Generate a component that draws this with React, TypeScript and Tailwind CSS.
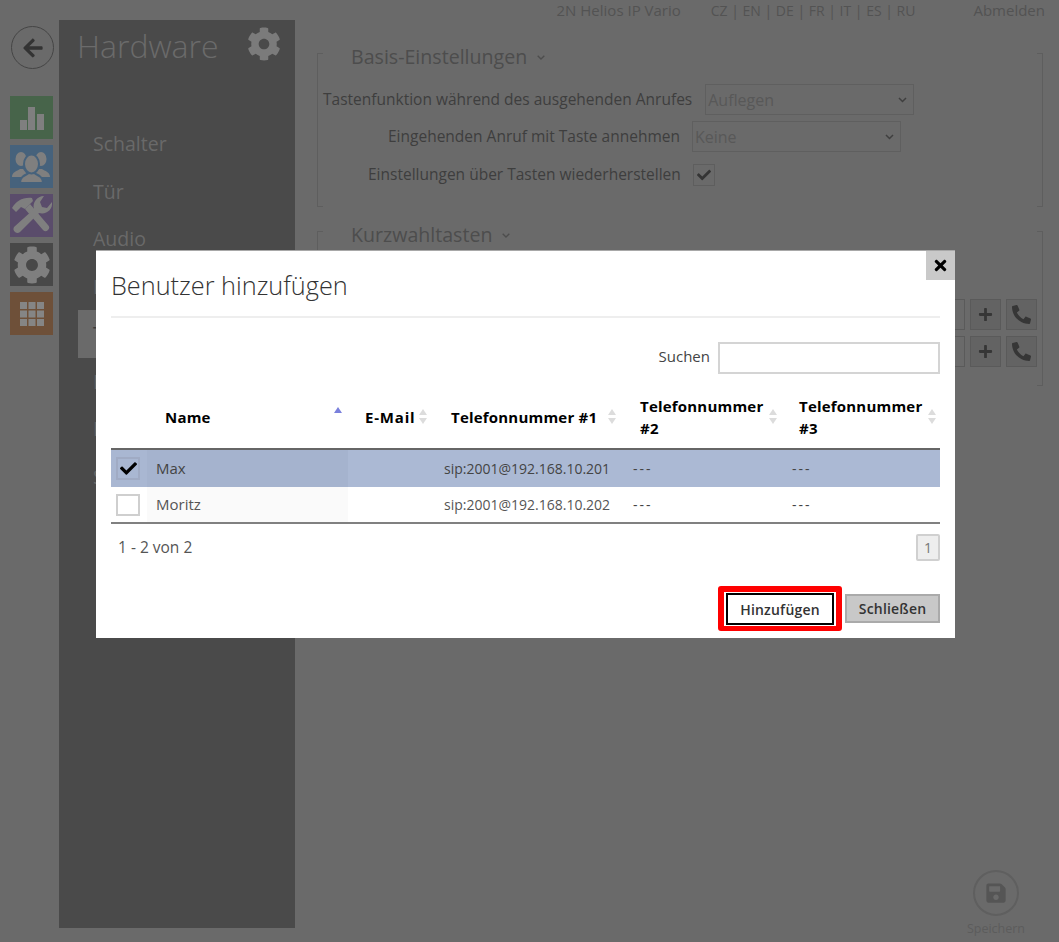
import { FaArrowLeft, FaCheck, FaCog, FaPhone, FaPlus, FaSave, FaTimes } from "react-icons/fa"

const menu = ["Schalter", "Tür", "Audio", "Kamera", "Tastatur", "Mikrofon", "E/A", "Sensor"]

function SortArrows({ active }: { active?: boolean }) {
  return (
    <svg width="8" height="15" viewBox="0 0 8 15" className="shrink-0">
      <path d="M4 0 8 6H0z" fill={active ? "#7a80dc" : "#dcdcdc"} />
      {!active && <path d="M4 15 0 9h8z" fill="#dcdcdc" />}
    </svg>
  )
}

function BarsIcon() {
  return (
    <svg width="43" height="43" viewBox="0 0 43 43" fill="#7f7f7f">
      <rect x="10" y="24" width="7" height="10" />
      <rect x="18" y="11" width="7" height="23" />
      <rect x="27" y="18" width="7" height="16" />
    </svg>
  )
}

function UsersIcon() {
  return (
    <svg width="43" height="43" viewBox="0 0 43 43" fill="#7f7f7f">
      <ellipse cx="11" cy="14" rx="5.500" ry="7" />
      <path d="M2 32c0-5 5-6 8-8h3l6 8z" />
      <ellipse cx="31" cy="14" rx="5.500" ry="7" />
      <path d="M40 32c0-5-5-6-8-8h-3l-6 8z" />
      <g stroke="#46627c" strokeWidth="2">
        <path d="M10 38c0-7 6-8 9-10h5c3 2 9 3 9 10z" />
        <ellipse cx="21.500" cy="19" rx="7.500" ry="9.500" />
      </g>
    </svg>
  )
}

function ToolsIcon() {
  return (
    <svg width="43" height="43" viewBox="0 0 43 43" fill="#7f7f7f">
      <path d="M15 15l5-5 18 21a3 3 0 0 1-5 5z" />
      <path d="M2 14c4-7 11-11 20-10l1 3-3 3-5 5-4-2-5 5z" />
      <path d="M4 33l20-18c-2-6 3-13 10-13l-4 6 2 5 5 1 5-6c1 8-6 13-13 11L10 38a4 4 0 0 1-6-5z" />
    </svg>
  )
}

function GridIcon() {
  const cells = [0, 8.5, 17]
  return (
    <svg width="24" height="24" viewBox="0 0 24 24" fill="#858585">
      {cells.map((y) => cells.map((x) => <rect key={`${x}-${y}`} x={x} y={y} width="7" height="7" />))}
    </svg>
  )
}

function Tile({ bg, children }: { bg: string; children: React.ReactNode }) {
  return <div className={`flex h-[43px] w-[43px] items-center justify-center ${bg}`}>{children}</div>
}

function Corners() {
  return (
    <>
      <span className="absolute left-0 top-0 h-px w-[5px] bg-[#5e5e5e]" />
      <span className="absolute bottom-0 left-0 h-px w-[5px] bg-[#5e5e5e]" />
      <span className="absolute right-0 top-0 h-px w-[5px] bg-[#5e5e5e]" />
      <span className="absolute bottom-0 right-0 h-px w-[5px] bg-[#5e5e5e]" />
    </>
  )
}

function SquareBtn({ children }: { children: React.ReactNode }) {
  return (
    <div className="flex h-[31px] w-[31px] items-center justify-center border border-[#5a5a5a] bg-[#636363] text-[#363636]">
      {children}
    </div>
  )
}

function Chevron() {
  return (
    <svg width="8" height="5" viewBox="0 0 8 5" fill="none" stroke="#4d4d4d" strokeWidth="1.300">
      <path d="M.7.7 4 4 7.300.7" />
    </svg>
  )
}

function FakeSelect({ value }: { value: string }) {
  return (
    <div className="flex h-[31px] w-[209px] items-center justify-between border border-[#5f5f5f] pl-0.5 pr-1.5 text-[16px] text-[#585858]">
      <span>{value}</span>
      <svg width="9" height="6" viewBox="0 0 9 6" fill="none" stroke="#3f3f3f" strokeWidth="1.500">
        <path d="M1 1l3.500 3.500L8 1" />
      </svg>
    </div>
  )
}

function Modal() {
  return (
    <div className="absolute left-[96px] top-[250px] h-[388px] w-[859px] border-t border-[#a8a8a8] bg-white px-[15px] font-['Open_Sans',sans-serif] text-[#444]">
      <button className="absolute right-0 top-0 flex h-[29px] w-[29px] items-center justify-center bg-[#c9c9c9] text-black">
        <FaTimes size={17} />
      </button>

      <h2 className="flex h-[67px] items-center border-b-2 border-[#eeeeee] pt-1 text-[25.300px] font-light leading-none text-[#333]">
        Benutzer hinzufügen
      </h2>

      <div className="mt-[24px] flex items-center justify-end gap-[8px]">
        <span className="pb-1 text-[15px]">Suchen</span>
        <input className="h-[32px] w-[222px] border-2 border-[#d4d4d4] bg-white" />
      </div>

      <table className="mt-[11px] w-[829px] table-fixed border-collapse text-[14px]">
        <colgroup>
          <col className="w-[36px]" />
          <col className="w-[201px]" />
          <col className="w-[89px]" />
          <col className="w-[188px]" />
          <col className="w-[159px]" />
          <col className="w-[156px]" />
        </colgroup>
        <thead>
          <tr className="h-[64px] border-b-2 border-[#666] text-left text-[15px] font-bold leading-[22px] tracking-[0.2px] text-black">
            <th />
            <th className="pl-[18px] pr-1.5">
              <div className="flex items-center justify-between">
                Name
                <span className="-mt-1"><SortArrows active /></span>
              </div>
            </th>
            <th className="pl-[17px]">
              <div className="flex items-center gap-[4px] tracking-[0.800px]">E-Mail <SortArrows /></div>
            </th>
            <th className="pl-[14px]">
              <div className="flex items-center gap-[11px]">Telefonnummer #1 <SortArrows /></div>
            </th>
            <th className="pl-[15px]">
              <div className="flex items-center gap-[4px]"><span className="w-[125px]">Telefonnummer #2</span> <SortArrows /></div>
            </th>
            <th className="pl-[15px]">
              <div className="flex items-center gap-[4px]"><span className="w-[125px]">Telefonnummer #3</span> <SortArrows /></div>
            </th>
          </tr>
        </thead>
        <tbody>
          <tr className="h-[38px] bg-[#abb9d4]">
            <td className="bg-[#a9b7d2]">
              <div className="ml-[5px] flex h-[23px] w-[24px] items-center justify-center border-2 border-[#a0abc4] text-black">
                <FaCheck size={17} />
              </div>
            </td>
            <td className="bg-[#a5b3ce] pl-[9px] text-[15px]">Max</td>
            <td />
            <td className="pl-[7px]">sip:2001@192.168.10.201</td>
            <td className="pl-2 tracking-[2px]">---</td>
            <td className="pl-2 tracking-[2px]">---</td>
          </tr>
          <tr className="h-[36px] border-b-2 border-[#808080]">
            <td>
              <div className="ml-[5px] mt-[1px] h-[22px] w-[24px] border-2 border-[#cfcfcf]" />
            </td>
            <td className="bg-[#fafafa] pl-[9px] text-[15px] text-[#555]">Moritz</td>
            <td />
            <td className="pl-[7px] text-[#555]">sip:2001@192.168.10.202</td>
            <td className="pl-2 tracking-[2px]">---</td>
            <td className="pl-2 tracking-[2px]">---</td>
          </tr>
        </tbody>
      </table>

      <div className="mt-[10px] flex items-center justify-between">
        <span className="pl-[7px] text-[15.500px] text-[#555]">1 - 2 von 2</span>
        <div className="flex h-[27px] w-[24px] items-center justify-center rounded-[2px] border-2 border-[#d0d0d0] bg-[#eeeeee] text-[14px] text-[#777]">
          1
        </div>
      </div>

      <div className="mt-[25px] flex items-center justify-end gap-[3px]">
        <div className="rounded-[3px] border-[6px] border-b-[5px] border-[#ff0000] px-[2px] py-[1px]">
          <button className="flex h-[32px] w-[108px] items-center justify-center border-2 border-black bg-white text-[14px] font-semibold tracking-[0.2px] text-[#333]">
            Hinzufügen
          </button>
        </div>
        <button className="flex h-[29px] w-[95px] items-center justify-center border-2 border-[#aaaaaa] bg-[#c8c8c8] text-[14px] font-semibold tracking-[0.2px] text-[#333]">
          Schließen
        </button>
      </div>
    </div>
  )
}

export default function App() {
  return (
    <div className="relative flex h-[942px] w-[1059px] overflow-hidden bg-[#6a6a6a] font-['Open_Sans',sans-serif]">
      <div className="w-[59px] shrink-0 pl-[10px] pt-[26px]">
        <div className="ml-px flex h-[43px] w-[43px] items-center justify-center rounded-full border border-[#454545] text-[#333]">
          <FaArrowLeft size={22} />
        </div>
        <div className="mt-[27px] flex flex-col gap-[6px]">
          <Tile bg="bg-[#47644a]"><BarsIcon /></Tile>
          <Tile bg="bg-[#46627c]"><UsersIcon /></Tile>
          <Tile bg="bg-[#5a4c6b]"><ToolsIcon /></Tile>
          <Tile bg="bg-[#484848]"><FaCog size={38} className="text-[#7f7f7f]" /></Tile>
          <Tile bg="bg-[#6e5039]"><GridIcon /></Tile>
        </div>
      </div>

      <aside className="mt-[20px] h-[908px] w-[236px] shrink-0 bg-[#4a4a4a]">
        <div className="flex items-center justify-between pl-[18px] pr-[14px] pt-[2px]">
          <h1 className="text-[32px] font-light text-[#6b6b6b]">Hardware</h1>
          <FaCog size={34} className="-mt-1 text-[#7b7b7b]" />
        </div>
        <ul className="mt-[50px] text-[19.500px] text-[#696969]">
          {menu.map((item, i) => (
            <li key={item} className={`ml-[19px] flex h-[47.500px] items-center pl-[15px] ${i === 4 ? "bg-[#6a6a6a] text-[#3c3c3c]" : ""}`}>
              {item}
            </li>
          ))}
        </ul>
      </aside>

      <main className="flex-1 pl-[22px] pr-[16px] text-[#3e3e3e]">
        <div className="flex h-[21px] items-center justify-end text-[15px] text-[#535353]">
          <span>2N Helios IP Vario</span>
          <span className="ml-[30px] text-[14px]">CZ | EN | DE | FR | IT | ES | RU</span>
          <span className="ml-[58px] mr-[-2px]">Abmelden</span>
        </div>

        <section className="relative mt-[32px] h-[154px] border-x border-[#5e5e5e]">
          <Corners />
          <h3 className="flex h-[8px] items-center gap-[10px] pl-[33px] text-[19.600px] text-[#4d4d4d]">
            Basis-Einstellungen <Chevron />
          </h3>
          <div className="mt-[23px] flex items-center gap-[13px] pl-[5px] text-[15.500px]">
            <span>Tastenfunktion während des ausgehenden Anrufes</span>
            <FakeSelect value="Auflegen" />
          </div>
          <div className="mt-[6px] flex items-center gap-[12px] pl-[70px] text-[15.500px]">
            <span>Eingehenden Anruf mit Taste annehmen</span>
            <FakeSelect value="Keine" />
          </div>
          <div className="mt-[11px] flex items-center gap-[12px] pl-[50px] text-[15.500px]">
            <span>Einstellungen über Tasten wiederherstellen</span>
            <div className="flex h-[22px] w-[22px] items-center justify-center border border-[#5e5e5e] text-[#353535]">
              <FaCheck size={14} />
            </div>
          </div>
        </section>

        <section className="relative mt-[24px] h-[155px] border-x border-[#5e5e5e]">
          <Corners />
          <h3 className="flex h-[8px] items-center gap-[10px] pl-[33px] text-[19.600px] text-[#4d4d4d]">
            Kurzwahltasten <Chevron />
          </h3>
          <div className="mt-[60px] flex flex-col items-end gap-[6px] pr-[5px]">
            {[0, 1].map((row) => (
              <div key={row} className="flex gap-[5px]">
                <div className="h-[31px] w-[40px] border border-[#5a5a5a]" />
                <SquareBtn><FaPlus size={15} /></SquareBtn>
                <SquareBtn><FaPhone size={19} className="-scale-x-100" /></SquareBtn>
              </div>
            ))}
          </div>
        </section>

        <div className="mt-[484px] flex justify-end pr-[18px] text-[#5c5c5c]">
          <div className="flex flex-col items-center">
            <div className="flex h-[46px] w-[46px] items-center justify-center rounded-full border-2 border-[#5f5f5f] text-[#555]">
              <FaSave size={22} />
            </div>
            <span className="mt-[5px] text-[12.500px] leading-[16px]">Speichern</span>
          </div>
        </div>
      </main>

      <Modal />
    </div>
  )
}
